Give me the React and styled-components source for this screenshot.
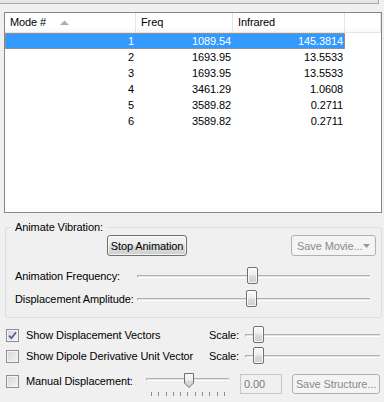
import React from "react";
import styled, { createGlobalStyle, css } from "styled-components";

const GlobalStyle = createGlobalStyle`
  html, body { margin: 0; padding: 0; background: #f0f0f0; }
  body {
    font-family: "Liberation Sans", Arial, sans-serif;
    font-size: 11px;
    letter-spacing: -0.1px;
    color: #000;
  }
  * { box-sizing: border-box; }
`;

const Page = styled.div`
  width: 384px;
  height: 402px;
  overflow: hidden;
  display: flex;
  flex-direction: column;
`;

const TopStrip = styled.div`
  width: 379px;
  height: 4px;
  background: #e6e6e6;
  border-bottom: 1px solid #a9a9a9;
  border-right: 1px solid #a9a9a9;
`;

const List = styled.div`
  margin: 8px 0 0 4px;
  width: 378px;
  height: 201px;
  border: 1px solid #828790;
  background: #fff;
  overflow: hidden;
`;

const cols = css`
  display: grid;
  grid-template-columns: 131px 97px 112px 1fr;
`;

const Header = styled.div`
  ${cols};
  height: 20px;
  border-bottom: 1px solid #e5e5e5;
  background: linear-gradient(#ffffff, #ffffff 70%, #f7f8f9);
`;

const HeadCell = styled.div`
  display: flex;
  align-items: center;
  padding-left: 5px;
  border-right: 1px solid #e5e5e5;
  line-height: 13px;
  white-space: nowrap;
`;

const SortArrow = styled.svg`
  margin-left: 14px;
  width: 9px;
  height: 5px;
`;

const Row = styled.div`
  ${cols};
  grid-template-columns: 131px 97px 112px;
  width: 340px;
  height: 16px;
  line-height: 16px;
  ${(p) =>
    p.$selected &&
    css`
      background: #3399ff;
      color: #fff;
      outline: 1px dotted #e08a3a;
      outline-offset: -1px;
    `}
`;

const Cell = styled.div`
  text-align: right;
  padding-right: 2px;
  white-space: nowrap;
`;

const Group = styled.fieldset`
  margin: 8px 0 0 5px;
  width: 377px;
  height: 97px;
  border: 1px solid #d5dfe5;
  border-radius: 3px;
  padding: 0;
  min-width: 0;
`;

const Legend = styled.legend`
  margin-left: 5px;
  padding: 0 4px;
  line-height: 13px;
  font-size: 11px;
`;

const ButtonRow = styled.div`
  display: flex;
  justify-content: space-between;
  align-items: center;
  margin-top: 1px;
  padding: 0 5px 0 101px;
`;

const Button = styled.div`
  display: flex;
  align-items: center;
  justify-content: ${(p) => (p.$split ? "space-between" : "center")};
  width: ${(p) => p.$w}px;
  height: ${(p) => p.$h || 21}px;
  padding: 0 ${(p) => (p.$split ? 5 : 0)}px;
  border-radius: 3px;
  white-space: nowrap;
  ${(p) =>
    p.$disabled
      ? css`
          border: 1px solid #adb2b5;
          background: #f4f4f4;
          color: #8a8a8a;
        `
      : css`
          border: 1px solid #707070;
          background: linear-gradient(#f2f2f2, #ebebeb 48%, #dddddd 52%, #cfcfcf);
          box-shadow: inset 0 0 0 1px rgba(255, 255, 255, 0.7);
          color: #000;
        `}
`;

const DropArrow = styled.svg`
  width: 7px;
  height: 4px;
`;

const SliderRow = styled.div`
  display: flex;
  align-items: center;
  height: 20px;
  margin-top: ${(p) => p.$mt}px;
  padding-left: 9px;
`;

const RowLabel = styled.div`
  width: ${(p) => p.$w}px;
  flex: none;
  white-space: nowrap;
  line-height: 13px;
  margin-top: ${(p) => p.$mt || 0}px;
`;

const SliderBox = styled.div`
  position: relative;
  flex: none;
  width: ${(p) => p.$w}px;
  height: ${(p) => p.$h || 20}px;
`;

const Track = styled.div`
  position: absolute;
  left: ${(p) => p.$left || 0}px;
  right: ${(p) => p.$right || 0}px;
  top: ${(p) => p.$top}px;
  height: 3px;
  border-top: 1px solid #b1b1b1;
  border-left: 1px solid #b1b1b1;
  border-bottom: 1px solid #ffffff;
  background: #e3e3e3;
`;

const Thumb = styled.div`
  position: absolute;
  left: ${(p) => p.$left}px;
  top: ${(p) => p.$top}px;
  width: 11px;
  height: 17px;
  border: 1px solid #707070;
  border-radius: 2px;
  background: linear-gradient(#fafafa, #ededed 45%, #d9d9d9 55%, #d0d0d0);
  box-shadow: inset 0 0 0 1px rgba(255, 255, 255, 0.8);
`;

const PointThumb = styled.svg`
  position: absolute;
  left: ${(p) => p.$left}px;
  top: ${(p) => p.$top}px;
  width: 10px;
  height: 15px;
`;

const Ticks = styled.div`
  position: absolute;
  left: 10px;
  width: 74px;
  top: 20px;
  height: 4px;
  display: flex;
  justify-content: space-between;
`;

const Tick = styled.span`
  width: 1px;
  height: 4px;
  background: #8a8a8a;
`;

const CheckRow = styled.div`
  display: flex;
  align-items: ${(p) => (p.$top ? "flex-start" : "center")};
  height: ${(p) => p.$h || 20}px;
  margin-top: ${(p) => p.$mt}px;
  padding-left: 6px;
`;

const Box = styled.span`
  flex: none;
  position: relative;
  width: 13px;
  height: 13px;
  margin-right: 7px;
  margin-top: ${(p) => p.$mt || 0}px;
  border: 1px solid #8e8f8f;
  background: linear-gradient(135deg, #d4d7db, #f3f3f3);
  box-shadow: inset 0 0 0 1px #f4f4f4;
`;

const CheckMark = styled.svg`
  position: absolute;
  left: 1px;
  top: 1px;
  width: 9px;
  height: 9px;
`;

const ScaleLabel = styled.div`
  width: 36px;
  flex: none;
  line-height: 13px;
`;

const TextBox = styled.div`
  flex: none;
  margin: 2px 0 0 6px;
  width: 42px;
  height: 20px;
  border: 1px solid #c4c7c9;
  background: #f0f0f0;
  color: #7a7a7a;
  padding-left: 3px;
  line-height: 18px;
`;

const StructureButton = styled(Button)`
  margin: 2px 0 0 10px;
`;

function Slider({ width, thumb, top = 1, trackTop = 9 }) {
  return (
    <SliderBox $w={width}>
      <Track $top={trackTop} />
      <Thumb $left={thumb} $top={top} />
    </SliderBox>
  );
}

function Checkbox({ checked, mt }) {
  return (
    <Box $mt={mt}>
      {checked && (
        <CheckMark viewBox="0 0 9 9">
          <path
            d="M1 4.6 L3.4 7.2 L8 1.2"
            fill="none"
            stroke="#4a5f97"
            strokeWidth="1.7"
          />
        </CheckMark>
      )}
    </Box>
  );
}

const rows = [
  ["1", "1089.54", "145.3814"],
  ["2", "1693.95", "13.5533"],
  ["3", "1693.95", "13.5533"],
  ["4", "3461.29", "1.0608"],
  ["5", "3589.82", "0.2711"],
  ["6", "3589.82", "0.2711"],
];

export default function App() {
  return (
    <Page>
      <GlobalStyle />
      <TopStrip />
      <List>
        <Header>
          <HeadCell>
            Mode #
            <SortArrow viewBox="0 0 9 5">
              <polygon points="0,5 4.5,0.5 9,5" fill="#a9afb6" />
            </SortArrow>
          </HeadCell>
          <HeadCell>Freq</HeadCell>
          <HeadCell>Infrared</HeadCell>
          <HeadCell />
        </Header>
        {rows.map((r, i) => (
          <Row key={i} $selected={i === 0}>
            {r.map((c, j) => (
              <Cell key={j}>{c}</Cell>
            ))}
          </Row>
        ))}
      </List>

      <Group>
        <Legend>Animate Vibration:</Legend>
        <ButtonRow>
          <Button $w={80}>Stop Animation</Button>
          <Button $w={85} $disabled $split>
            Save Movie...
            <DropArrow viewBox="0 0 7 4">
              <polygon points="0,0 7,0 3.5,4" fill="#9a9a9a" />
            </DropArrow>
          </Button>
        </ButtonRow>
        <SliderRow $mt={10}>
          <RowLabel $w={122}>Animation Frequency:</RowLabel>
          <Slider width={233} thumb={110} />
        </SliderRow>
        <SliderRow $mt={3}>
          <RowLabel $w={122}>Displacement Amplitude:</RowLabel>
          <Slider width={233} thumb={109} />
        </SliderRow>
      </Group>

      <CheckRow $mt={7}>
        <Checkbox checked />
        <RowLabel $w={183}>Show Displacement Vectors</RowLabel>
        <ScaleLabel>Scale:</ScaleLabel>
        <Slider width={135} thumb={8} />
      </CheckRow>
      <CheckRow $mt={1}>
        <Checkbox />
        <RowLabel $w={183}>Show Dipole Derivative Unit Vector</RowLabel>
        <ScaleLabel>Scale:</ScaleLabel>
        <Slider width={135} thumb={8} />
      </CheckRow>
      <CheckRow $mt={6} $h={26} $top>
        <Checkbox mt={3} />
        <RowLabel $w={115} $mt={3}>
          Manual Displacement:
        </RowLabel>
        <SliderBox $w={93} $h={26}>
          <Track $left={5} $right={5} $top={6} />
          <PointThumb $left={43} $top={1} viewBox="0 0 10 15">
            <defs>
              <linearGradient id="pt" x1="0" y1="0" x2="0" y2="1">
                <stop offset="0" stopColor="#fafafa" />
                <stop offset="0.5" stopColor="#ececec" />
                <stop offset="0.55" stopColor="#dadada" />
                <stop offset="1" stopColor="#d0d0d0" />
              </linearGradient>
            </defs>
            <polygon
              points="0.5,0.5 9.5,0.5 9.5,10 5,14.5 0.5,10"
              fill="url(#pt)"
              stroke="#707070"
              strokeWidth="1"
            />
          </PointThumb>
          <Ticks>
            {Array.from({ length: 11 }).map((_, i) => (
              <Tick key={i} />
            ))}
          </Ticks>
        </SliderBox>
        <TextBox>0.00</TextBox>
        <StructureButton $w={88} $h={20} $disabled>
          Save Structure...
        </StructureButton>
      </CheckRow>
    </Page>
  );
}
